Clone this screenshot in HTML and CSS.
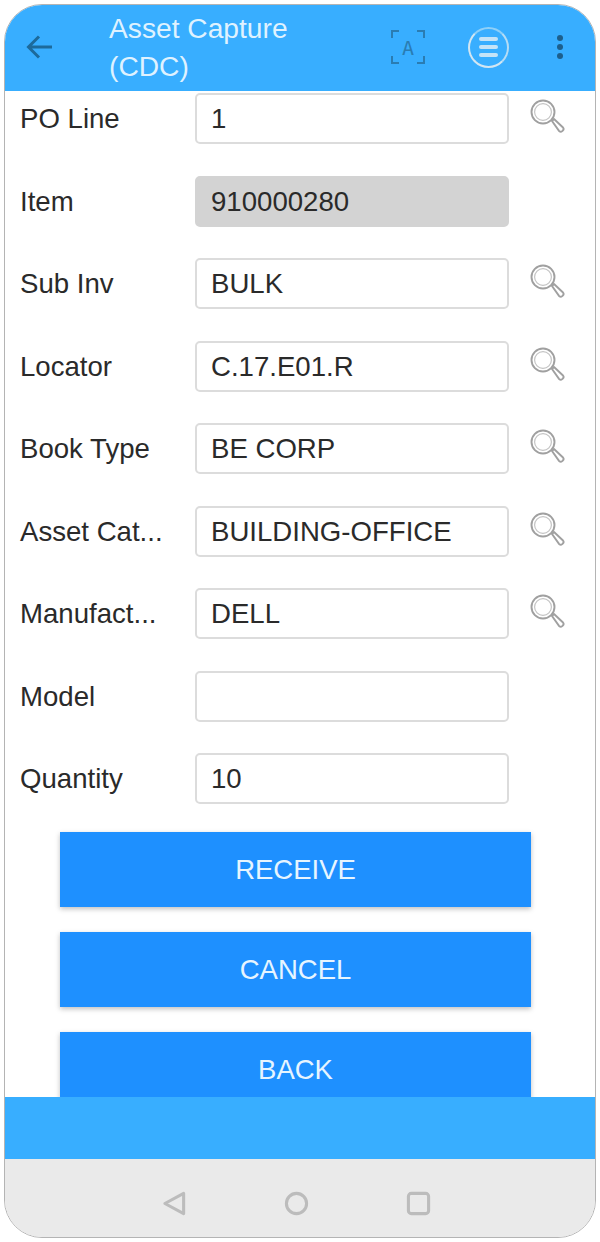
FILE: index.html
```html
<!DOCTYPE html>
<html lang="en">
<head>
    <meta charset="UTF-8">
    <meta name="viewport" content="width=device-width,initial-scale=1.0">
    <title>Asset Capture (CDC)</title>
    <link rel="stylesheet" href="styles.css">
</head>
<body>
    <svg class="svg-defs" width="0" height="0">
        <symbol id="search" viewBox="0 0 36 36">
            <circle cx="14" cy="14" r="11.500" fill="none" stroke="#a0a0a0" stroke-width="1.900"/>
            <circle cx="14" cy="14" r="8.400" fill="none" stroke="#c4c4c4" stroke-width="1.200"/>
            <path d="M23 23l2-2 9 8.500a2.200 2.200 0 0 1-.2 3l-.6.600a2.200 2.200 0 0 1-3 0z" fill="#fff" stroke="#a0a0a0" stroke-width="1.900" stroke-linejoin="round"/>
        </symbol>
    </svg>

    <div class="phone">
        <header class="app-bar">
            <svg class="back-icon" width="28" height="28" viewBox="0 0 28 28">
                <path d="M2 14h24M13 3.500L2.500 14 13 24.500" fill="none" stroke="#1d6a9b" stroke-width="3"/>
            </svg>
            <h1 class="app-title">Asset Capture (CDC)</h1>
            <svg class="scan-icon" width="34" height="34" viewBox="0 0 34 34">
                <path d="M1 8V1h7M26 1h7v7M1 26v7h7M26 33h7v-7" fill="none" stroke="#2a7cb2" stroke-width="2"/>
                <text x="17" y="25" text-anchor="middle" class="scan-letter">A</text>
            </svg>
            <div class="menu-btn">
                <span></span><span></span><span></span>
            </div>
            <div class="dots">
                <span></span><span></span><span></span>
            </div>
        </header>

        <main class="content">
            <div class="form">
                <div class="row">
                    <label>PO Line</label>
                    <div class="field">1</div>
                    <svg class="search-icon"><use href="#search"/></svg>
                </div>
                <div class="row">
                    <label>Item</label>
                    <div class="field disabled">910000280</div>
                </div>
                <div class="row">
                    <label>Sub Inv</label>
                    <div class="field">BULK</div>
                    <svg class="search-icon"><use href="#search"/></svg>
                </div>
                <div class="row">
                    <label>Locator</label>
                    <div class="field">C.17.E01.R</div>
                    <svg class="search-icon"><use href="#search"/></svg>
                </div>
                <div class="row">
                    <label>Book Type</label>
                    <div class="field">BE CORP</div>
                    <svg class="search-icon"><use href="#search"/></svg>
                </div>
                <div class="row">
                    <label>Asset Cat...</label>
                    <div class="field">BUILDING-OFFICE</div>
                    <svg class="search-icon"><use href="#search"/></svg>
                </div>
                <div class="row">
                    <label>Manufact...</label>
                    <div class="field">DELL</div>
                    <svg class="search-icon"><use href="#search"/></svg>
                </div>
                <div class="row">
                    <label>Model</label>
                    <div class="field"></div>
                </div>
                <div class="row">
                    <label>Quantity</label>
                    <div class="field">10</div>
                </div>
            </div>
            <div class="actions">
                <button class="btn">RECEIVE</button>
                <button class="btn">CANCEL</button>
                <button class="btn">BACK</button>
            </div>
        </main>

        <div class="bottom-bar"></div>

        <nav class="nav-bar">
            <svg width="25" height="25" viewBox="0 0 26 26">
                <path d="M3 13L22.500 2.500v21z" fill="none" stroke="#bcbcbc" stroke-width="3.200" stroke-linejoin="round"/>
            </svg>
            <svg width="25" height="25" viewBox="0 0 26 26">
                <circle cx="13" cy="13" r="10.500" fill="none" stroke="#bcbcbc" stroke-width="3.200"/>
            </svg>
            <svg width="25" height="25" viewBox="0 0 26 26">
                <rect x="2.500" y="2.500" width="21" height="21" rx="3" fill="none" stroke="#bcbcbc" stroke-width="3.200"/>
            </svg>
        </nav>
    </div>
</body>
</html>
```

FILE: styles.css
```css
html, body {
    margin: 0;
    padding: 0;
    background-color: #fff;
}
body {
    padding: 4px;
    font-family: 'Liberation Sans', Arial, sans-serif;
    color: #2a2a2a;
}
.svg-defs {
    display: block;
}
.phone {
    height: 1234px;
    box-sizing: border-box;
    display: flex;
    flex-direction: column;
    border: 1px solid #b4b4b4;
    border-radius: 38px;
    overflow: hidden;
    background-color: #fff;
}

/* top bar */
.app-bar {
    height: 86px;
    flex-shrink: 0;
    display: flex;
    align-items: center;
    background-color: #38aeff;
    padding-left: 21px;
    padding-bottom: 2px;
    box-sizing: border-box;
}
.back-icon {
    flex-shrink: 0;
}
.app-title {
    width: 230px;
    margin: 0 0 0 55px;
    font-size: 28.2px;
    font-weight: normal;
    line-height: 38px;
    color: #dff2ff;
}
.scan-icon {
    margin-left: 52px;
}
.scan-letter {
    font-family: 'DejaVu Sans Mono', monospace;
    font-size: 20px;
    fill: #2a7cb2;
}
.menu-btn {
    width: 41px;
    height: 41px;
    margin-left: 43px;
    box-sizing: border-box;
    border: 2.5px solid #d2e6f2;
    border-top-color: #8fd0f8;
    border-right-color: #b5dcf5;
    border-radius: 50%;
    display: flex;
    flex-direction: column;
    justify-content: center;
    gap: 4px;
    align-items: center;
}
.menu-btn span {
    width: 19px;
    height: 4px;
    border-radius: 2px;
    background-color: #c4e3f7;
}
.dots {
    margin-left: 48px;
    display: flex;
    flex-direction: column;
    gap: 3px;
}
.dots span {
    width: 6px;
    height: 6px;
    border-radius: 50%;
    background-color: #1d5f8c;
}

/* form */
.content {
    flex: 1;
    min-height: 0;
    overflow: hidden;
    padding-top: 2px;
}
.form {
    display: flex;
    flex-direction: column;
    gap: 31.5px;
}
.row {
    height: 51px;
    display: flex;
    align-items: center;
    padding-left: 15px;
}
.row label {
    width: 175px;
    flex-shrink: 0;
    padding-top: 1px;
    font-size: 27.6px;
}
.field {
    width: 314px;
    height: 51px;
    box-sizing: border-box;
    padding-left: 14px;
    border: 2px solid #dcdcdc;
    border-radius: 5px;
    font-size: 27.6px;
    line-height: 48px;
    background-color: #fff;
}
.field.disabled {
    background-color: #d3d3d3;
    border-color: #d3d3d3;
}
.search-icon {
    width: 36px;
    height: 36px;
    margin-left: 20px;
    margin-top: -5px;
}

/* buttons */
.actions {
    display: flex;
    flex-direction: column;
    gap: 25px;
    margin-top: 28px;
    padding-left: 55px;
}
.btn {
    width: 471px;
    height: 75px;
    flex-shrink: 0;
    border: none;
    padding: 0;
    font-family: inherit;
    font-size: 27.5px;
    color: #e6f5ff;
    background-color: #1e90ff;
    box-shadow: 0 2px 5px rgba(0,0,0,0.25);
}

/* bottom */
.bottom-bar {
    height: 62px;
    flex-shrink: 0;
    background-color: #38aeff;
}
.nav-bar {
    height: 78px;
    flex-shrink: 0;
    display: flex;
    justify-content: center;
    align-items: center;
    gap: 97px;
    padding-top: 10px;
    padding-right: 8px;
    box-sizing: border-box;
    background-color: #eaeaea;
}
```
